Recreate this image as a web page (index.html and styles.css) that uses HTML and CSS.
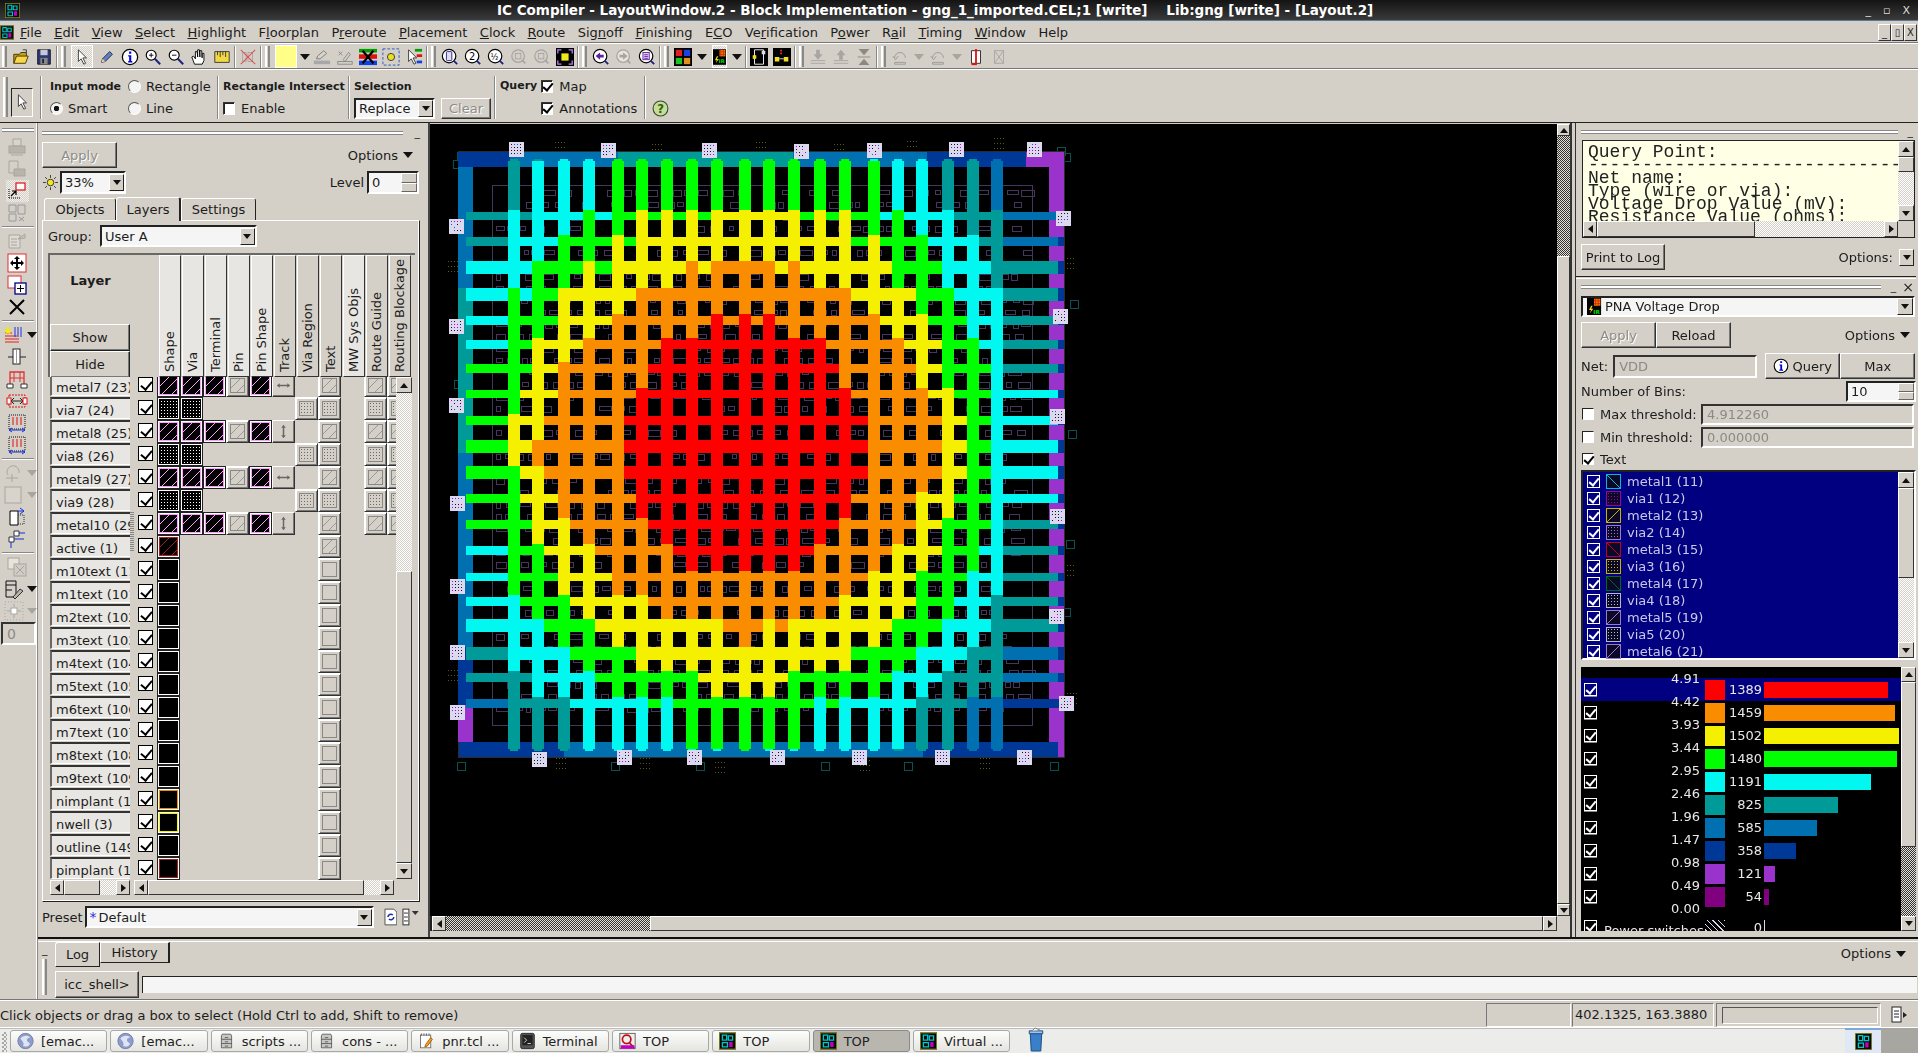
FILE: index.html
```html
<!DOCTYPE html>
<html lang="en">
<head>
<meta charset="UTF-8">
<title>IC Compiler - LayoutWindow.2</title>
<link rel="stylesheet" href="styles.css">
</head>
<body>
<svg class="sprites" xmlns="http://www.w3.org/2000/svg">
  <symbol id="chip" viewBox="0 0 20 20"><rect width="20" height="20" fill="#0a0a0a"/><rect x=".5" y=".5" width="19" height="19" fill="none" stroke="#8a8a20"/><path d="M4 3h5v6H4zM11 4h5v5h-5zM4 12h6v5H4z" fill="none" stroke="#00c8c8" stroke-width="1.5"/><path d="M12 11h4v6h-4z" fill="#c000c0"/></symbol>
  <symbol id="open" viewBox="0 0 20 20"><path d="M2 17V7h6l2-2h6v4" fill="#c8a020" stroke="#403000"/><path d="M2 17l3-8h13l-3 8z" fill="#f8d848" stroke="#403000"/><path d="M12 2l4 0 0 3" fill="none" stroke="#333"/></symbol>
  <symbol id="save" viewBox="0 0 20 20"><path d="M3 2h14v16H3z" fill="#2c3a78" stroke="#111"/><path d="M6 2h8v6H6z" fill="#c8c8d8"/><path d="M6 11h8v7H6z" fill="#888"/><path d="M8 12h2v5H8z" fill="#222"/></symbol>
  <symbol id="cursor" viewBox="0 0 20 20"><path d="M6 2v13l3-3 3 6 2-1-3-6h4z" fill="#fff" stroke="#333"/></symbol>
  <symbol id="pencil" viewBox="0 0 20 20"><path d="M4 16l1-4 8-8 3 3-8 8z" fill="#5f7fc8" stroke="#223"/><path d="M4 16l1-4 3 3z" fill="#eecc99"/></symbol>
  <symbol id="info" viewBox="0 0 20 20"><circle cx="10" cy="10" r="8.5" fill="#fff" stroke="#000" stroke-width="1.4"/><path d="M9 4h2.400v2.400H9zM8 8h3.400v6.500h1.200V16H8v-1.500h1.100V9.500H8z" fill="#0000e0"/></symbol>
  <symbol id="zoomin" viewBox="0 0 20 20"><circle cx="8" cy="8" r="5.500" fill="#fff" stroke="#000" stroke-width="1.3"/><path d="M5.500 8h5M8 5.500v5" stroke="#000"/><path d="M12 12l6 6" stroke="#202080" stroke-width="2.200"/></symbol>
  <symbol id="zoomout" viewBox="0 0 20 20"><circle cx="8" cy="8" r="5.500" fill="#fff" stroke="#000" stroke-width="1.3"/><path d="M5.500 8h5" stroke="#000"/><path d="M12 12l6 6" stroke="#202080" stroke-width="2.200"/></symbol>
  <symbol id="hand" viewBox="0 0 20 20"><path d="M5 18L2 10l2-1 2 3V4l2 0 .5 6V2h2l.5 8V3h2l.5 8V6h2v8l-2 4z" fill="#fff" stroke="#000"/></symbol>
  <symbol id="ruler" viewBox="0 0 20 20"><path d="M2 4l16 0 0 12-16 0z" fill="#f0d840" stroke="#333"/><path d="M5 4v4M8 4v6M11 4v4M14 4v6" stroke="#333"/></symbol>
  <symbol id="nopin" viewBox="0 0 20 20"><path d="M4 5h4v10H4zM10 5h5v10h-5z" fill="none" stroke="#a8a4a0"/><path d="M2 2l16 16M18 2L2 18" stroke="#e05050" stroke-width="1.200"/></symbol>
  <symbol id="erase" viewBox="0 0 20 20"><path d="M4 12l1-3 7-6 3 3-7 6z" fill="#d8d4cc" stroke="#777"/><rect x="1" y="14" width="18" height="4" fill="#a8a8a8"/></symbol>
  <symbol id="brush" viewBox="0 0 20 20"><path d="M3 4l4 4M7 4L3 8M8 13l6-8 2 2-6 8z" fill="none" stroke="#888"/><rect x="2" y="15" width="16" height="3" fill="none" stroke="#888"/></symbol>
  <symbol id="highx" viewBox="0 0 20 20"><rect width="20" height="4" y="1" fill="#00a000"/><rect y="7" width="20" height="5" fill="#e01010"/><rect y="14" width="20" height="5" fill="#1040e0"/><path d="M4 3l12 14M16 3L4 17" stroke="#000" stroke-width="2.400"/></symbol>
  <symbol id="sunbox" viewBox="0 0 20 20"><rect x="1" y="1" width="18" height="18" fill="none" stroke="#2050c0" stroke-dasharray="3 2"/><circle cx="10" cy="10" r="4" fill="#e8e020" stroke="#333"/></symbol>
  <symbol id="colcur" viewBox="0 0 20 20"><path d="M4 2v13l3-3 3 6 2-1-3-6h4z" fill="#fff" stroke="#333"/><rect x="11" y="1" width="8" height="3" fill="#00a000"/><rect x="13" y="7" width="6" height="3" fill="#e01010"/><rect x="13" y="14" width="6" height="3" fill="#1040e0"/></symbol>
  <symbol id="dev" viewBox="0 0 20 20"><circle cx="9" cy="9" r="7.500" fill="#fff" stroke="#000" stroke-width="1.300"/><rect x="6" y="4" width="6" height="10" rx="1" fill="#dde" stroke="#202080"/><path d="M14 14l4 4" stroke="#202080" stroke-width="2"/></symbol>
  <symbol id="mag2" viewBox="0 0 20 20"><circle cx="9" cy="9" r="7.500" fill="#fff" stroke="#000" stroke-width="1.300"/><text x="5.500" y="13" font-family="DejaVu Sans" font-size="11" fill="#000">2</text><path d="M14 14l4 4" stroke="#202080" stroke-width="2"/></symbol>
  <symbol id="magh" viewBox="0 0 20 20"><circle cx="9" cy="9" r="7.500" fill="#fff" stroke="#000" stroke-width="1.300"/><text x="4" y="13" font-family="DejaVu Sans" font-size="9" fill="#000">½</text><path d="M14 14l4 4" stroke="#202080" stroke-width="2"/></symbol>
  <symbol id="gmag" viewBox="0 0 20 20"><circle cx="9" cy="9" r="7" fill="none" stroke="#a8a4a0" stroke-width="1.400"/><rect x="6" y="6" width="6" height="6" fill="none" stroke="#a8a4a0"/><path d="M14 14l3 3" stroke="#a8a4a0" stroke-width="2"/></symbol>
  <symbol id="fitbox" viewBox="0 0 20 20"><rect width="20" height="20" fill="#000"/><rect x="6" y="6" width="8" height="8" fill="#f0e820"/><path d="M2 6V2h4M14 2h4v4M18 14v4h-4M6 18H2v-4" fill="none" stroke="#c080ff" stroke-width="1.400"/></symbol>
  <symbol id="back" viewBox="0 0 20 20"><circle cx="9" cy="9" r="7.500" fill="#fff" stroke="#000" stroke-width="1.300"/><path d="M4 9l5-4v2.500h4v3H9V13z" fill="#6020a0"/><path d="M14 14l4 4" stroke="#202080" stroke-width="2"/></symbol>
  <symbol id="fwd" viewBox="0 0 20 20"><circle cx="9" cy="9" r="7" fill="#e8e4dc" stroke="#a8a4a0" stroke-width="1.400"/><path d="M14 9l-5-4v2.500H5v3h4V13z" fill="#a8a4a0"/><path d="M14 14l3 3" stroke="#a8a4a0" stroke-width="2"/></symbol>
  <symbol id="lst" viewBox="0 0 20 20"><circle cx="9" cy="9" r="7.500" fill="#fff" stroke="#000" stroke-width="1.300"/><rect x="5.500" y="5" width="7" height="8" fill="#e0d0f0" stroke="#6020a0"/><path d="M7 7.500h4M7 9.500h4M7 11.500h4" stroke="#6020a0"/><path d="M14 14l4 4" stroke="#202080" stroke-width="2"/></symbol>
  <symbol id="quad" viewBox="0 0 20 20"><rect width="20" height="20" fill="#000"/><rect x="2" y="2" width="7" height="7" fill="#e02020"/><rect x="11" y="2" width="7" height="7" fill="#2040e0"/><rect x="2" y="11" width="7" height="7" fill="#20c020"/><rect x="11" y="11" width="7" height="7" fill="#e09020"/></symbol>
  <symbol id="ir" viewBox="0 0 20 24"><rect width="20" height="24" fill="#000"/><rect x="10" y="1" width="9" height="10" fill="#e08000"/><path d="M12 1v10M16 1v10M10 4h9M10 8h9" stroke="#e01010"/><path d="M6 11l-3 6h3l-2 5 5-7H6l2-4z" fill="#f0e020"/><text x="9" y="22" font-family="DejaVu Sans" font-size="8" font-weight="700" fill="#00e000">IR</text></symbol>
  <symbol id="blk1" viewBox="0 0 20 20"><rect width="20" height="20" fill="#000"/><path d="M5 2h10v16H5z" fill="none" stroke="#fff"/><rect x="3" y="8" width="4" height="4" fill="#f0e020"/><rect x="13" y="3" width="4" height="4" fill="#e0e0e0"/></symbol>
  <symbol id="blk2" viewBox="0 0 20 20"><rect width="20" height="20" fill="#000"/><rect x="2" y="10" width="5" height="5" fill="#f0e020"/><rect x="12" y="10" width="5" height="5" fill="#f0e020"/><path d="M9 2v5" stroke="#e03030" stroke-width="2" stroke-dasharray="2 1"/><path d="M7 12h5" stroke="#e0e0e0"/></symbol>
  <symbol id="gdown" viewBox="0 0 20 20"><path d="M8 2h4v5h3l-5 6-5-6h3z" fill="#a8a4a0"/><path d="M2 14h16M2 17h16" stroke="#a8a4a0"/></symbol>
  <symbol id="gup" viewBox="0 0 20 20"><path d="M8 13h4V8h3l-5-6-5 6h3z" fill="#a8a4a0"/><path d="M2 14h16M2 17h16" stroke="#a8a4a0"/></symbol>
  <symbol id="gupdn" viewBox="0 0 20 20"><path d="M4 1h12l-6 7zM4 19h12l-6-7z" fill="#8c8880"/><path d="M3 10h14" stroke="#8c8880"/></symbol>
  <symbol id="undo" viewBox="0 0 20 20"><path d="M4 11a6 6 0 1 1 12 0" fill="none" stroke="#999"/><path d="M2 9l3 4 3-4" fill="none" stroke="#999"/><path d="M4 16h12v2H4z" fill="none" stroke="#999"/></symbol>
  <symbol id="book" viewBox="0 0 20 20"><path d="M5 3h10v14H5z" fill="#fff" stroke="#222"/><path d="M10 1v16" stroke="#e01010" stroke-width="2"/><path d="M5 18l6 0" stroke="#e01010" stroke-width="2"/></symbol>
  <symbol id="gbook" viewBox="0 0 20 20"><path d="M5 3h10v14H5z" fill="none" stroke="#a8a4a0"/><path d="M5 3l10 14M15 3L5 17" stroke="#a8a4a0"/></symbol>
  <symbol id="printer" viewBox="0 0 22 22"><path d="M7 3h8v7H7z" fill="#d8d4cc" stroke="#a8a4a0"/><rect x="3" y="10" width="16" height="7" fill="#b8b4ac" stroke="#a8a4a0"/><path d="M5 19h12" stroke="#a8a4a0"/></symbol>
  <symbol id="copy" viewBox="0 0 22 22"><path d="M3 3h9v12H3z" fill="none" stroke="#a8a4a0"/><path d="M8 11h11v7H8z" fill="#b8b4ac" stroke="#a8a4a0"/></symbol>
  <symbol id="selcorner" viewBox="0 0 22 22"><path d="M3 18V8M3 18h12" stroke="#000" stroke-dasharray="1 1"/><rect x="10" y="3" width="9" height="7" fill="#fff" stroke="#e01010" stroke-width="1.200"/><path d="M5 16l5-5M6 11h4v4" fill="none" stroke="#000" stroke-width="1.200"/></symbol>
  <symbol id="glayout" viewBox="0 0 22 22"><path d="M3 3h7v7H3zM3 12h7v7H3zM12 3h7v9h-7z" fill="none" stroke="#999"/><path d="M13 15l5 4M18 15l-5 4" stroke="#999"/></symbol>
  <symbol id="gdoc" viewBox="0 0 22 22"><path d="M3 5h11v13H3z" fill="#dedad2" stroke="#a8a4a0"/><path d="M12 9l7-5v4z" fill="#c8c4bc" stroke="#a8a4a0"/><path d="M5 9h6M5 12h6M5 15h6" stroke="#a8a4a0"/></symbol>
  <symbol id="move" viewBox="0 0 22 22"><rect x="2" y="2" width="18" height="18" fill="#fff" stroke="#e03030"/><path d="M11 4l3 3h-2v3h3V8l3 3-3 3v-2h-3v3h2l-3 3-3-3h2v-3H7v2l-3-3 3-3v2h3V7H8z" fill="#000"/></symbol>
  <symbol id="addbox" viewBox="0 0 22 22"><rect x="2" y="2" width="13" height="12" fill="#fff" stroke="#e03030"/><rect x="9" y="9" width="11" height="11" fill="#fff" stroke="#000080" stroke-width="1.300"/><path d="M11 14.500h7M14.500 11v7" stroke="#000"/></symbol>
  <symbol id="cross" viewBox="0 0 22 22"><path d="M4 4l14 14M18 4L4 18" stroke="#000" stroke-width="2"/></symbol>
  <symbol id="layers" viewBox="0 0 22 22"><path d="M2 6h4M2 9h7M2 12h12M2 15h14M2 18h14" stroke="#e02020"/><path d="M12 3v10M15 3v10M18 3v10" stroke="#2030e0"/><path d="M5 2l1.500 3 3 .5-2.500 2 .5 3L5 9l-2.500 1.500.5-3-2.500-2 3-.5z" fill="#f0e820"/></symbol>
  <symbol id="slider" viewBox="0 0 22 22"><path d="M2 11h18" stroke="#222"/><rect x="7" y="3" width="7" height="15" fill="#fff" stroke="#222"/><path d="M10.500 3v15" stroke="#999"/></symbol>
  <symbol id="bracket" viewBox="0 0 22 22"><path d="M4 19V4h14v15" fill="none" stroke="#e03030" stroke-width="1.300"/><path d="M8 4v10M14 4v10M4 10h14" stroke="#e03030"/><path d="M1 16h6v4H1zM15 16h6v4h-6z" fill="#fff" stroke="#333"/></symbol>
  <symbol id="dashbox" viewBox="0 0 22 22"><rect x="3" y="5" width="16" height="12" fill="none" stroke="#e01010" stroke-dasharray="2 1"/><path d="M6 11h10M5 11l3-3M5 11l3 3M17 11l-3-3M17 11l-3 3" stroke="#222"/><rect x="1" y="8" width="4" height="6" fill="#fff" stroke="#e01010"/><rect x="17" y="8" width="4" height="6" fill="#fff" stroke="#e01010"/></symbol>
  <symbol id="spread" viewBox="0 0 22 22"><rect x="3" y="3" width="16" height="14" fill="none" stroke="#111" stroke-dasharray="1 1"/><path d="M7 5v8M11 5v8M15 5v8" stroke="#e01010"/><path d="M3 18h16M3 18l3-2M3 18l3 2M19 18l-3-2M19 18l-3 2" stroke="#1030e0"/></symbol>
  <symbol id="gplus" viewBox="0 0 22 22"><path d="M5 13a6 6 0 1 1 11-2" fill="none" stroke="#a8a4a0"/><path d="M3 16h12M9 12v8" stroke="#a8a4a0"/></symbol>
  <symbol id="gsquare" viewBox="0 0 22 22"><rect x="2" y="3" width="16" height="16" fill="#d8d4cc" stroke="#a8a4a0"/></symbol>
  <symbol id="docarr" viewBox="0 0 22 22"><path d="M4 5h8v14H4z" fill="#fff" stroke="#000"/><path d="M12 5h6M14 2l4 3-4 3" fill="none" stroke="#1030e0"/><path d="M12 9h6v9h-6" fill="none" stroke="#333" stroke-dasharray="1 1"/></symbol>
  <symbol id="cells" viewBox="0 0 22 22"><path d="M3 9h5v5H3zM8 3h5v5H8z" fill="#fff" stroke="#333"/><path d="M13 5h6M5 14v6M8 11h10" stroke="#1030e0"/></symbol>
  <symbol id="gstack" viewBox="0 0 22 22"><rect x="2" y="2" width="11" height="11" fill="#e8e4dc" stroke="#a8a4a0"/><rect x="8" y="8" width="12" height="12" fill="#d0ccc4" stroke="#a8a4a0"/><path d="M10 10l8 8M18 10l-8 8" stroke="#a8a4a0"/></symbol>
  <symbol id="docwrench" viewBox="0 0 22 22"><path d="M3 3h10v16H3z" fill="none" stroke="#111"/><path d="M3 7h10M3 12h6" stroke="#111"/><path d="M10 19l7-8 3 2-8 8z" fill="#b8b4ac" stroke="#333"/></symbol>
  <symbol id="gcells" viewBox="0 0 22 22"><rect x="2" y="2" width="18" height="18" fill="none" stroke="#a8a4a0" stroke-dasharray="1 2"/><rect x="8" y="8" width="6" height="6" fill="#fff" stroke="#a8a4a0"/><path d="M4 11h3M15 11h3M11 4v3M11 15v3" stroke="#a8a4a0"/></symbol>
  <symbol id="sun" viewBox="0 0 16 16"><circle cx="8" cy="8" r="3.500" fill="#f0e820" stroke="#333"/><path d="M8 0v3M8 13v3M0 8h3M13 8h3M2.300 2.300l2 2M11.700 11.700l2 2M2.300 13.700l2-2M11.700 4.300l2-2" stroke="#333"/></symbol>
  <symbol id="help" viewBox="0 0 16 16"><circle cx="8" cy="8" r="7" fill="#c4dc9c" stroke="#384828"/><text x="5" y="12" font-family="DejaVu Sans" font-size="11" font-weight="700" fill="#306000">?</text></symbol>
  <symbol id="refresh" viewBox="0 0 14 18"><path d="M1 1h9l3 3v13H1z" fill="#fff" stroke="#555"/><path d="M4 9a3 3 0 0 1 5-2M10 9a3 3 0 0 1-5 2" fill="none" stroke="#2030a0" stroke-width="1.600"/></symbol>
  <symbol id="presetmenu" viewBox="0 0 18 18"><rect x="1" y="1" width="6" height="16" fill="#fff" stroke="#333"/><path d="M2 5h4M2 9h4M2 13h4" stroke="#333"/><path d="M10 3h7l-3.500 4z" fill="#333"/></symbol>
  <symbol id="logmenu" viewBox="0 0 18 18"><rect x="2" y="1" width="9" height="15" fill="#fff" stroke="#222"/><path d="M4 5h5M4 8h5M4 11h5" stroke="#222"/><path d="M13 6l4 3-4 3z" fill="#222"/></symbol>
  <symbol id="globe" viewBox="0 0 20 20"><circle cx="10" cy="10" r="9" fill="#8e9ccc" stroke="#707a9c"/><path d="M4 7c3-4 9-4 12-1-3 0-5 2-4 4s3 1 3 4c-2 3-6 3-8 2 2-3 0-5-3-9z" fill="#dfe4f4"/></symbol>
  <symbol id="cabinet" viewBox="0 0 20 20"><path d="M5 2h10l1 2v14H4V4z" fill="#c8c8c4" stroke="#555"/><path d="M4 8h12M4 13h12M8 6h4M8 11h4M8 16h4" stroke="#555"/></symbol>
  <symbol id="notepad" viewBox="0 0 20 20"><rect x="3" y="3" width="12" height="15" fill="#fff" stroke="#666"/><path d="M4 1v3M7 1v3M10 1v3M13 1v3" stroke="#666"/><path d="M8 17l1-3 6-8 2 2-6 8z" fill="#f0a020" stroke="#a05000"/></symbol>
  <symbol id="term" viewBox="0 0 20 20"><rect x="2" y="1" width="16" height="18" rx="2" fill="#555" stroke="#222"/><rect x="4" y="3" width="12" height="12" fill="#222"/><path d="M6 6l3 3-3 3M10 13h4" stroke="#eee" fill="none"/></symbol>
  <symbol id="topapp" viewBox="0 0 20 20"><rect x="1" y="1" width="18" height="18" fill="#eee" stroke="#555"/><circle cx="9" cy="8" r="5" fill="none" stroke="#c01010" stroke-width="2"/><path d="M12 12l6 6" stroke="#c01010" stroke-width="2"/><rect x="2" y="15" width="16" height="4" fill="#c000c0"/></symbol>
  <symbol id="trash" viewBox="0 0 20 26"><path d="M4 6h12l-1 19H5z" fill="#3a80c8" stroke="#1a4a80"/><path d="M3 4h14v3H3z" fill="#a0c4ec" stroke="#1a4a80"/><path d="M6 4l3-3 5 2" fill="#fff" stroke="#777"/></symbol>
  <symbol id="hbar" viewBox="0 0 20 8"><path d="M1 4l4-3v2h10V1l4 3-4 3V5H5v2z" fill="#6a6864"/></symbol>
  <symbol id="vbar" viewBox="0 0 8 20"><path d="M4 1l3 4H5v10h2l-3 4-3-4h2V5H1z" fill="#6a6864"/></symbol>
</svg>

<div class="titlebar">
  <svg class="title-icon"><use href="#chip"/></svg>
  <span class="title-text">IC Compiler - LayoutWindow.2 - Block Implementation - gng_1_imported.CEL;1 [write]    Lib:gng [write] - [Layout.2]</span>
  <span class="win-ctl"><span>_</span><span>▫</span><span>X</span></span>
</div>

<div class="menubar">
  <svg class="menu-icon"><use href="#chip"/></svg>
  <nav class="menu">
    <span><u>F</u>ile</span><span><u>E</u>dit</span><span><u>V</u>iew</span><span><u>S</u>elect</span><span><u>H</u>ighlight</span><span>F<u>l</u>oorplan</span><span>P<u>r</u>eroute</span><span><u>P</u>lacement</span><span><u>C</u>lock</span><span><u>R</u>oute</span><span>Sig<u>n</u>off</span><span><u>F</u>inishing</span><span>E<u>C</u>O</span><span>Ve<u>r</u>ification</span><span>P<u>o</u>wer</span><span>R<u>a</u>il</span><span><u>T</u>iming</span><span><u>W</u>indow</span><span>Help</span>
  </nav>
  <span class="mdi-ctl"><span>_</span><span>▯</span><span>X</span></span>
</div>

<div class="toolbar">
  <i class="grip-v"></i>
  <svg class="tool t1"><use href="#open"/></svg><svg class="tool"><use href="#save"/></svg>
  <i class="tool-sep"></i><i class="grip-v"></i>
  <span class="tool-on"><svg class="tool"><use href="#cursor"/></svg></span><svg class="tool"><use href="#pencil"/></svg><svg class="tool"><use href="#info"/></svg><svg class="tool"><use href="#zoomin"/></svg><svg class="tool"><use href="#zoomout"/></svg><svg class="tool"><use href="#hand"/></svg><svg class="tool"><use href="#ruler"/></svg>
  <i class="tool-sep"></i><svg class="tool"><use href="#nopin"/></svg>
  <i class="tool-sep"></i><i class="grip-v"></i>
  <span class="tool-on yellow"></span><i class="tri tight"></i><svg class="tool"><use href="#erase"/></svg><svg class="tool"><use href="#brush"/></svg><svg class="tool"><use href="#highx"/></svg><svg class="tool"><use href="#sunbox"/></svg><svg class="tool"><use href="#colcur"/></svg>
  <i class="tool-sep"></i><i class="grip-v"></i>
  <svg class="tool"><use href="#dev"/></svg><svg class="tool"><use href="#mag2"/></svg><svg class="tool"><use href="#magh"/></svg><svg class="tool"><use href="#gmag"/></svg><svg class="tool"><use href="#gmag"/></svg><svg class="tool"><use href="#fitbox"/></svg>
  <i class="tool-sep"></i><i class="grip-v"></i>
  <svg class="tool"><use href="#back"/></svg><svg class="tool"><use href="#fwd"/></svg><svg class="tool"><use href="#lst"/></svg>
  <i class="tool-sep"></i><i class="grip-v"></i>
  <svg class="tool"><use href="#quad"/></svg><i class="tri"></i><span class="tool-on ir-on"><svg class="tool"><use href="#ir"/></svg></span><i class="tri"></i>
  <i class="tool-sep"></i><svg class="tool"><use href="#blk1"/></svg><svg class="tool"><use href="#blk2"/></svg>
  <i class="tool-sep"></i><i class="grip-v"></i>
  <svg class="tool"><use href="#gdown"/></svg><svg class="tool"><use href="#gup"/></svg><svg class="tool"><use href="#gupdn"/></svg>
  <i class="tool-sep"></i><i class="grip-v"></i>
  <svg class="tool"><use href="#undo"/></svg><i class="tri gray"></i><svg class="tool"><use href="#undo"/></svg><i class="tri gray"></i><svg class="tool"><use href="#book"/></svg><svg class="tool"><use href="#gbook"/></svg>
</div>

<div class="modebar">
  <i class="grip-v tall"></i>
  <span class="mode-tool"><svg><use href="#cursor"/></svg></span>
  <i class="mode-sep"></i>
  <div class="mode-group input-mode">
    <b>Input mode</b><label><i class="radio"></i>Rectangle</label>
    <label><i class="radio on"></i>Smart</label><label><i class="radio"></i>Line</label>
  </div>
  <i class="mode-sep"></i>
  <div class="mode-stack rect-int"><b>Rectangle Intersect</b><label><i class="check sm"></i>Enable</label></div>
  <i class="mode-sep"></i>
  <div class="mode-stack sel-box">
    <b>Selection</b>
    <div class="sel-row"><span class="combo sel-combo"><span class="combo-text">Replace</span><i class="combo-btn"></i></span><span class="btn off clear-btn">Clear</span></div>
  </div>
  <i class="mode-sep"></i>
  <div class="query-box">
    <b>Query</b>
    <div class="mode-stack"><label><i class="check sm on"></i>Map</label><label><i class="check sm on"></i>Annotations</label></div>
  </div>
  <i class="mode-sep"></i>
  <svg class="help-icon"><use href="#help"/></svg>
</div>

<div class="work">
  <aside class="side-tools">
    <i class="side-grip"></i>
    <svg class="side"><use href="#printer"/></svg><svg class="side"><use href="#copy"/></svg><span class="side-on"><svg class="side"><use href="#selcorner"/></svg></span><svg class="side"><use href="#glayout"/></svg>
    <i class="side-sep"></i>
    <svg class="side"><use href="#gdoc"/></svg><svg class="side"><use href="#move"/></svg><svg class="side"><use href="#addbox"/></svg><svg class="side"><use href="#cross"/></svg>
    <i class="side-sep"></i>
    <span class="side-row"><svg class="side"><use href="#layers"/></svg><i class="tri"></i></span><svg class="side"><use href="#slider"/></svg><svg class="side"><use href="#bracket"/></svg><svg class="side"><use href="#dashbox"/></svg><svg class="side"><use href="#spread"/></svg><svg class="side"><use href="#spread"/></svg>
    <i class="side-sep"></i>
    <span class="side-row"><svg class="side"><use href="#gplus"/></svg><i class="tri gray"></i></span><span class="side-row"><svg class="side"><use href="#gsquare"/></svg><i class="tri gray"></i></span><svg class="side"><use href="#docarr"/></svg><svg class="side"><use href="#cells"/></svg>
    <i class="side-sep"></i>
    <svg class="side"><use href="#gstack"/></svg><span class="side-row"><svg class="side"><use href="#docwrench"/></svg><i class="tri"></i></span><span class="side-row"><svg class="side"><use href="#gcells"/></svg><i class="tri gray"></i></span>
    <span class="side-field">0</span>
  </aside>

  <div class="work-right">
    <div class="panels">
      <section class="left-dock">
        <div class="dock-head"><i class="grip-h"></i><span class="dash">_</span></div>
        <div class="apply-row"><span class="btn off apply-btn">Apply</span><span class="options">Options <i class="tri"></i></span></div>
        <div class="level-row">
          <svg class="sun"><use href="#sun"/></svg>
          <span class="combo pct-combo"><span class="combo-text">33%</span><i class="combo-btn"></i></span>
          <span class="level-label">Level</span>
          <span class="spin level-spin"><span class="combo-text">0</span><span class="spin-btns"><i></i><i></i></span></span>
        </div>
        <div class="tabs"><span class="tab">Objects</span><span class="tab active">Layers</span><span class="tab">Settings</span></div>
        <div class="tab-pane">
          <div class="group-row"><span>Group:</span><span class="combo group-combo"><span class="combo-text">User A</span><i class="combo-btn"></i></span></div>
          <div class="layer-head" id="layer-head">
            <div class="head-left">
              <b class="layer-title">Layer</b>
              <span class="head-btn">Show</span>
              <span class="head-btn">Hide</span>
            </div>
          </div>
          <div class="layer-body">
            <div class="layer-rows" id="layer-rows"></div>
            <div class="vscroll table-scroll"><i class="arrow up"></i><i class="dither light"></i><i class="thumb"></i><i class="arrow down"></i></div>
            <i class="col-grip"></i>
          </div>
          <div class="layer-hbars">
            <div class="hscroll names-bar"><i class="arrow left"></i><i class="thumb"></i><i class="dither light"></i><i class="arrow right"></i></div>
            <div class="hscroll cells-bar"><i class="arrow left"></i><i class="thumb"></i><i class="dither light"></i><i class="arrow right"></i></div>
          </div>
        </div>
        <div class="preset-row">
          <span>Preset</span>
          <span class="combo preset-combo"><span class="combo-text"><em>*</em>Default</span><i class="combo-btn"></i></span>
          <svg class="preset-a"><use href="#refresh"/></svg>
          <svg class="preset-b"><use href="#presetmenu"/></svg>
        </div>
      </section>

      <i class="splitter"></i>

      <section class="view-area">
        <div class="view-top">
          <canvas id="layout" width="1127" height="792"></canvas>
          <div class="vscroll view-v"><i class="arrow up"></i><i class="dither dark"></i><i class="thumb"></i><i class="arrow down"></i></div>
        </div>
        <div class="hscroll view-h"><i class="arrow left"></i><i class="dither dark"></i><i class="thumb"></i><i class="arrow right"></i></div>
      </section>

      <i class="splitter right"></i>

      <section class="right-dock">
        <div class="dock-head r1"><i class="grip-h"></i><span class="dash">_</span></div>
        <div class="query-text">
          <div class="query-main">
            <pre class="query-pre">Query Point:
---------------------------------------
Net name:
Type (wire or via):
Voltage Drop Value (mV):
Resistance Value (ohms):</pre>
            <div class="vscroll q-v"><i class="arrow up"></i><i class="thumb"></i><i class="dither light"></i><i class="arrow down"></i></div>
          </div>
          <div class="hscroll q-h"><i class="arrow left"></i><i class="thumb"></i><i class="dither light"></i><i class="arrow right"></i></div>
        </div>
        <div class="print-row"><span class="btn print-btn">Print to Log</span><span class="print-opt">Options:<i class="combo-btn"></i></span></div>
        <i class="dock-divider"></i>
        <div class="dock-head r2"><i class="grip-h"></i><span class="dash">_</span><span class="dock-x">×</span></div>
        <span class="combo pna-combo"><span class="combo-text"><svg class="pna-icon"><use href="#ir"/></svg>PNA Voltage Drop</span><i class="combo-btn"></i></span>
        <div class="pna-actions"><span class="btn off act">Apply</span><span class="btn act">Reload</span><span class="options">Options <i class="tri"></i></span></div>
        <div class="net-row"><span>Net:</span><span class="field net-field">VDD</span><span class="btn q-btn"><svg><use href="#info"/></svg>Query</span><span class="btn max-btn">Max</span></div>
        <div class="bins-row"><span>Number of Bins:</span><span class="spin bins-spin"><span class="combo-text">10</span><span class="spin-btns"><i></i><i></i></span></span></div>
        <div class="thresh-row"><i class="check"></i><span class="t-name">Max threshold:</span><span class="field t-field">4.912260</span></div>
        <div class="thresh-row"><i class="check"></i><span class="t-name">Min threshold:</span><span class="field t-field">0.000000</span></div>
        <div class="text-row"><i class="check on"></i>Text</div>
        <div class="layer-list">
          <div class="list-rows" id="list-rows"></div>
          <div class="vscroll list-v"><i class="arrow up"></i><i class="thumb"></i><i class="dither light"></i><i class="arrow down"></i></div>
        </div>
        <div class="hist">
          <div class="hist-rows" id="hist-rows"></div>
          <div class="vscroll hist-v"><i class="arrow up"></i><i class="thumb"></i><i class="dither dark"></i><i class="arrow down"></i></div>
        </div>
      </section>
    </div>

    <div class="log-dock">
      <div class="log-left">
        <span class="dash">_</span>
        <i class="grip-v log-grip"></i>
      </div>
      <div class="log-main">
        <div class="log-tabs"><span class="tab active log-tab">Log</span><span class="tab hist-tab">History</span><span class="options log-opt">Options <i class="tri"></i></span></div>
        <div class="shell-row"><span class="btn shell-btn">icc_shell&gt;</span><span class="shell-input"></span></div>
      </div>
    </div>
  </div>
</div>

<footer class="statusbar">
  <span class="status-msg">Click objects or drag a box to select (Hold Ctrl to add, Shift to remove)</span>
  <span class="status-cell s-a"></span>
  <span class="status-cell s-b">402.1325, 163.3880</span>
  <span class="status-cell s-c"><i></i></span>
  <svg class="status-icon"><use href="#logmenu"/></svg>
</footer>

<div class="taskbar">
  <i class="task-grip"></i>
  <span class="task"><svg><use href="#globe"/></svg>[emac...</span>
  <span class="task"><svg><use href="#globe"/></svg>[emac...</span>
  <span class="task"><svg><use href="#cabinet"/></svg>scripts ...</span>
  <span class="task"><svg><use href="#cabinet"/></svg>cons - ...</span>
  <span class="task"><svg><use href="#notepad"/></svg>pnr.tcl ...</span>
  <span class="task"><svg><use href="#term"/></svg>Terminal</span>
  <span class="task"><svg><use href="#topapp"/></svg>TOP</span>
  <span class="task"><svg><use href="#chip"/></svg>TOP</span>
  <span class="task current"><svg><use href="#chip"/></svg>TOP</span>
  <span class="task"><svg><use href="#chip"/></svg>Virtual ...</span>
  <svg class="trash"><use href="#trash"/></svg>
  <span class="tray"><span class="tray-on"><svg><use href="#chip"/></svg></span></span>
</div>

<script src="script.js"></script>
</body>
</html>
```
FILE: styles.css
```css
* { box-sizing: border-box; }
html, body { margin: 0; padding: 0; }
body {
  width: 1918px;
  height: 1053px;
  overflow: hidden;
  background: #d4d0c8;
  color: #1c1c1c;
  font-family: "DejaVu Sans", sans-serif;
  font-size: 13px;
  line-height: 15px;
  display: flex;
  flex-direction: column;
}
i, em { font-style: normal; }
.sprites { width: 0; height: 0; position: absolute; }

/* title + menu */
.titlebar {
  height: 21px;
  background: linear-gradient(#141414, #3a3a3a);
  color: #fff;
  display: flex;
  align-items: center;
  border-bottom: 1px solid #5a7a9a;
  flex: none;
}
.title-icon { width: 15px; height: 15px; margin-left: 5px; }
.title-text { margin-left: 477px; font-weight: 700; white-space: pre; font-size: 13.5px; }
.win-ctl { margin-left: auto; display: flex; gap: 12px; margin-right: 8px; color: #ddd; font-size: 11px; }
.menubar {
  height: 23px;
  display: flex;
  align-items: center;
  border-bottom: 1px solid #fff;
  box-shadow: inset 0 -1px 0 #777;
  flex: none;
}
.menu-icon { width: 14px; height: 15px; margin-left: 0; }
.menu { display: flex; gap: 12.4px; margin-left: 6px; }
.mdi-ctl { margin-left: auto; display: flex; margin-right: 1px; }
.mdi-ctl span {
  width: 13px; height: 17px; font-size: 10px; line-height: 15px; text-align: center;
  border: 1px solid; border-color: #fff #333 #333 #fff;
}

/* toolbars */
.toolbar {
  height: 26px;
  display: flex;
  align-items: center;
  gap: 5px;
  padding-left: 2px;
  border-bottom: 1px solid #fff;
  box-shadow: inset 0 -1px 0 #777;
  flex: none;
}
.grip-v { width: 5px; height: 21px; border-left: 2px solid #fff; border-right: 2px solid #888; background: #d4d0c8; flex: none; }
.grip-v.tall { height: 40px; margin: 0 2px 0 3px; }
.tool { width: 18px; height: 18px; flex: none; }
.tool-sep { width: 2px; height: 22px; border-left: 1px solid #888; border-right: 1px solid #fff; flex: none; margin: 0 -2px; }
.tool-on {
  width: 22px; height: 23px; display: flex; align-items: center; justify-content: center; flex: none;
  border: 1px solid #fff; background: repeating-conic-gradient(#d4d0c8 0 25%, #f2f0ec 0 50%) 0 0 / 2px 2px;
}
.tool-on.yellow { background: #ffff88; }
.tool-on.ir-on { width: 15px; }
.tool-on.ir-on .tool { width: 13px; height: 20px; }
.tri { width: 0; height: 0; border: 5px solid transparent; border-top: 6px solid #111; border-bottom: 0; display: inline-block; flex: none; }
.tri.gray { border-top-color: #a8a4a0; }
.tri.tight { margin: 0 -2px; }
.modebar {
  height: 53px;
  display: flex;
  align-items: center;
  border-bottom: 1px solid #222;
  flex: none;
  padding-top: 2px;
}
.modebar b { font-size: 11px; white-space: nowrap; }
.mode-tool {
  width: 22px; height: 29px; margin-left: 1px; margin-top: 10px; display: flex; align-items: center; justify-content: center;
  border: 1px solid; border-color: #222 #fff #fff #222;
}
.mode-tool svg { width: 18px; height: 20px; }
.mode-sep { width: 2px; height: 43px; border-left: 1px solid #888; border-right: 1px solid #fff; flex: none; }
.mode-tool + .mode-sep { margin-left: 7px; }
.input-mode {
  display: grid;
  grid-template-columns: 78px auto;
  grid-auto-rows: 22px;
  align-items: center;
  padding-left: 8px;
  width: 175px;
}
.modebar label { display: flex; align-items: center; }
.radio { width: 13px; height: 13px; border-radius: 50%; background: #f4f4f4; border: 1px solid; border-color: #555 #fff #fff #555; margin-right: 5px; display: inline-block; flex: none; }
.radio.on { background: radial-gradient(circle, #111 0 2.5px, #f4f4f4 3px); }
.mode-stack { display: grid; grid-auto-rows: 22px; align-items: center; }
.rect-int { padding-left: 4px; width: 129px; }
.sel-box { padding-left: 4px; width: 144px; }
.sel-row { display: flex; gap: 6px; }
.sel-combo { width: 81px; height: 21px; }
.clear-btn { width: 50px; height: 21px; }
.query-box { display: flex; padding-left: 4px; width: 148px; align-items: flex-start; }
.query-box b { line-height: 22px; margin-right: 4px; }
.help-icon { width: 17px; height: 17px; margin: 22px 0 0 6px; }
.check {
  width: 15px; height: 15px; background: #fff; border: 1px solid #000; display: inline-block; flex: none; position: relative;
}
.check.sm { width: 12px; height: 13px; margin-right: 6px; border-color: #333 #fff #fff #333; box-shadow: inset 1px 1px 0 #222; }
.check.on::after {
  content: ""; position: absolute; left: 4px; top: 1px; width: 5px; height: 9px;
  border: solid #000; border-width: 0 2px 2px 0; transform: rotate(40deg);
}
.check.sm.on::after { left: 3px; top: 0; width: 4px; height: 8px; }

/* shared controls */
.btn {
  display: flex; align-items: center; justify-content: center;
  border: 1px solid; border-color: #fff #333 #333 #fff;
  box-shadow: inset -1px -1px 0 #777; background: #d4d0c8; flex: none;
}
.btn.off { color: #8e8c88; text-shadow: 1px 1px 0 #fff; }
.combo {
  display: flex; align-items: center; background: #f5f5f5; flex: none;
  border: 2px solid; border-color: #222 #fff #fff #222; outline: 0;
}
.combo-text { flex: 1; padding-left: 3px; white-space: nowrap; overflow: hidden; display: flex; align-items: center; }
.combo-btn {
  width: 15px; height: 17px; margin-right: 0; display: flex; align-items: center; justify-content: center; flex: none;
  background: #d4d0c8; border: 1px solid; border-color: #fff #222 #222 #fff;
}
.combo-btn::after { content: ""; border: 4px solid transparent; border-top: 5px solid #111; border-bottom: 0; }
.spin { display: flex; background: #f5f5f5; border: 2px solid; border-color: #222 #fff #fff #222; flex: none; }
.spin-btns { width: 16px; display: flex; flex-direction: column; background: #d4d0c8; }
.spin-btns i { flex: 1; border: 1px solid; border-color: #fff #666 #666 #fff; }
.field { display: flex; align-items: center; padding-left: 4px; color: #8a8a86; border: 2px solid; border-color: #333 #fff #fff #333; flex: none; }
.options { display: flex; align-items: center; gap: 5px; }
.grip-h { flex: 1; height: 4px; border-top: 1px solid #888; border-bottom: 1px solid #888; background: #fff; display: block; }
.dash { font-size: 11px; line-height: 10px; }
.dither.light { background: repeating-conic-gradient(#d4d0c8 0 25%, #fff 0 50%) 0 0 / 2px 2px; }
.dither.dark { background: repeating-conic-gradient(#333 0 25%, #e4e0d8 0 50%) 0 0 / 2px 2px; }
.thumb { background: #d4d0c8; border: 1px solid; border-color: #fff #333 #333 #fff; display: block; }
.arrow {
  background: #d4d0c8; border: 1px solid; border-color: #fff #333 #333 #fff; display: flex; align-items: center; justify-content: center; flex: none;
}
.arrow::after { content: ""; border: 4px solid transparent; }
.arrow.up::after { border-bottom: 5px solid #111; border-top: 0; }
.arrow.down::after { border-top: 5px solid #111; border-bottom: 0; }
.arrow.left::after { border-right: 5px solid #111; border-left: 0; }
.arrow.right::after { border-left: 5px solid #111; border-right: 0; }
.vscroll { display: flex; flex-direction: column; flex: none; width: 16px; }
.vscroll .arrow { height: 16px; }
.vscroll .thumb, .vscroll .dither { width: 100%; }
.hscroll { display: flex; flex: none; height: 15px; }
.hscroll .arrow { width: 14px; }
.hscroll .thumb, .hscroll .dither { height: 100%; }

/* main work area */
.work { flex: none; height: 876px; display: flex; }
.side-tools {
  width: 38px; flex: none; display: flex; flex-direction: column; align-items: flex-start;
  border-right: 1px solid #888; box-shadow: inset -1px 0 0 #fff;
}
.side-grip { width: 32px; height: 4px; margin: 5px 0 4px 2px; border-top: 1px solid #888; border-bottom: 1px solid #888; background: #fff; display: block; flex: none; }
.side { width: 22px; height: 22px; flex: none; margin-left: 6px; }
.side-on { display: block; background: repeating-conic-gradient(#d4d0c8 0 25%, #f2f0ec 0 50%) 0 0 / 2px 2px; height: 22px; width: 23px; margin-left: 6px; flex: none; }
.side-on .side { margin-left: 0; }
.side-row { display: flex; align-items: center; height: 22px; flex: none; gap: 2px; }
.side-row .side { margin-left: 3px; }
.side-sep { width: 32px; height: 2px; margin: 2px 0 2px 2px; border-top: 1px solid #888; border-bottom: 1px solid #fff; flex: none; display: block; }
.side-field {
  width: 35px; height: 23px; margin-left: 1px; padding-left: 4px; font-size: 14px; line-height: 20px; color: #8a8a86;
  border: 2px solid; border-color: #333 #fff #fff #333; flex: none;
}
.work-right { flex: 1; display: flex; flex-direction: column; min-width: 0; }
.panels { height: 814px; display: flex; flex: none; }

/* left dock */
.left-dock { width: 382px; flex: none; padding-left: 4px; display: flex; flex-direction: column; }
.dock-head { height: 19px; display: flex; align-items: center; gap: 10px; flex: none; }
.left-dock .dock-head .grip-h { margin-right: 2px; }
.apply-row { height: 26px; display: flex; justify-content: space-between; align-items: center; flex: none; margin-right: 7px; }
.apply-btn { width: 75px; height: 26px; }
.level-row { height: 23px; margin-top: 3px; display: flex; align-items: center; flex: none; }
.sun { width: 15px; height: 15px; margin-left: 1px; }
.pct-combo { width: 66px; height: 23px; margin-left: 2px; }
.level-label { margin-left: auto; margin-right: 3px; }
.level-spin { width: 52px; height: 23px; margin-right: 1px; }
.tabs { height: 24px; margin-top: 2px; display: flex; align-items: flex-end; flex: none; padding-left: 2px; }
.tab {
  height: 22px; padding: 0 10px; display: flex; align-items: center; border: 1px solid; border-color: #fff #222 transparent #fff; border-bottom: 0;
  border-radius: 3px 3px 0 0; flex: none;
}
.tabs .tab { width: 72px; justify-content: center; }
.tabs .tab.active { height: 24px; width: 65px; position: relative; z-index: 1; border-right-width: 2px; margin-bottom: -1px; background: #d4d0c8; }
.tabs .tab:last-child { width: 75px; }
.tab-pane {
  width: 378px; height: 682px; flex: none; padding: 4px 4px 0 5px; display: flex; flex-direction: column;
  border: 1px solid; border-color: #fff #222 #222 #fff; box-shadow: inset -1px -1px 0 #fff;
}
.group-row { height: 22px; display: flex; align-items: center; flex: none; }
.group-combo { width: 157px; height: 22px; margin-left: 8px; }
.layer-head {
  margin-top: 6px; height: 124px; flex: none; display: grid;
  grid-template-columns: 109px repeat(11, 23px);
  border: solid #6a6864; border-width: 2px 0 0 2px;
}
.head-left { display: flex; flex-direction: column; align-items: flex-start; }
.layer-title { height: 69px; width: 81px; text-align: center; padding-top: 18px; }
.head-btn {
  width: 80px; height: 27px; display: flex; align-items: center; justify-content: center;
  border: 1px solid; border-color: #fff #222 #222 #fff; box-shadow: inset -1px -1px 0 #777; flex: none;
}
.col-head {
  writing-mode: vertical-rl; transform: rotate(180deg); display: flex; align-items: center; justify-content: flex-start;
  padding: 4px 0 0 0; white-space: nowrap; line-height: 22px; height: 122px; width: 22px; overflow: hidden;
  border: 1px solid; border-color: #333 #fff #fff #333;
}
.col-head.light { background: #e8e6e2; }
.layer-body { height: 503px; display: flex; flex: none; position: relative; }
.layer-rows { width: 348px; overflow: hidden; flex: none; }
.layer-row { height: 23px; display: grid; grid-template-columns: 82px 27px repeat(11, 23px); align-items: start; }
.layer-row:first-child { margin-top: -3px; }
.row-name {
  display: block; height: 22px; margin-left: 2px; width: 80px; background: #e8e6e2; overflow: hidden; white-space: nowrap; padding: 4px 0 0 4px;
  border-top: 2px solid #333; border-left: 2px solid #6a6864; border-bottom: 1px solid #fff; line-height: 15px;
}
.row-check { margin: 3px 0 0 8px; }
.cell { width: 23px; height: 23px; position: relative; display: block; }
.cell.blank { border: 1px solid; border-color: #fff #333 #333 #fff; background: #d4d0c8; box-shadow: inset 1px 1px 0 #fff, inset -1px -1px 0 #777; }
.cell.blank::after { content: ""; position: absolute; inset: 3px; border: 1px solid #8a8884; background: var(--fill, none); }
.cell.paint { background: #000; border: 1px solid #222; box-shadow: inset 0 0 0 1px #fff; }
.cell.paint::after { content: ""; position: absolute; inset: 1px; background: var(--fill, #000); border: 1px solid var(--line, #fff); }
.cell.track { border: 1px solid; border-color: #fff #333 #333 #fff; background: #d4d0c8; box-shadow: inset -1px -1px 0 #777; padding: 3px; }
.cell.track svg { width: 100%; height: 100%; display: block; }
.cell.none { visibility: hidden; }
.table-scroll { width: 16px; height: 503px; }
.table-scroll .dither { height: 178px; flex: none; }
.table-scroll .thumb { height: 292px; flex: none; }
.col-grip { position: absolute; left: 82px; top: 135px; width: 4px; height: 40px; background: repeating-linear-gradient(#888 0 1px, #d4d0c8 1px 2px); }
.layer-hbars { display: flex; height: 16px; flex: none; margin-left: 2px; gap: 4px; }
.names-bar { width: 80px; }
.names-bar .thumb { width: 36px; }
.names-bar .dither { width: 16px; }
.cells-bar { width: 261px; }
.cells-bar .thumb { width: 216px; }
.cells-bar .dither { width: 16px; }
.preset-row { height: 22px; margin-top: 4px; display: flex; align-items: center; flex: none; }
.preset-combo { width: 289px; height: 22px; margin-left: 2px; }
.preset-combo em { color: #3030e0; margin-right: 2px; font-size: 14px; }
.preset-a { width: 14px; height: 18px; margin-left: 10px; }
.preset-b { width: 18px; height: 18px; margin-left: 5px; }
.splitter { width: 10px; flex: none; border-right: 2px solid #444; }

/* canvas */
.view-area { width: 1140px; flex: none; display: flex; flex-direction: column; }
.view-top { display: flex; height: 793px; padding-top: 1px; flex: none; }
#layout { width: 1127px; height: 792px; background: #000; display: block; flex: none; }
.view-v { width: 13px; height: 792px; }
.view-v .arrow { height: 12px; }
.view-v .dither { height: 120px; flex: none; }
.view-v .thumb { height: 648px; flex: none; }
.view-h { width: 1127px; height: 15px; border: solid #222; border-width: 0 0 0 2px; }
.view-h .dither { width: 204px; flex: none; }
.view-h .thumb { flex: 1; }
.splitter.right { width: 6px; border-right: 1px solid #333; border-left: 2px solid #333; }

/* right dock */
.right-dock { width: 340px; flex: none; padding-left: 5px; display: flex; flex-direction: column; }
.dock-head.r1 { height: 17px; margin-right: 3px; }
.query-text { width: 333px; height: 98px; border: 1px solid #222; flex: none; background: #d4d0c8; margin-left: 1px; }
.query-main { height: 80px; display: flex; }
.query-pre {
  flex: 1; margin: 0; padding: 5px 0 0 5px; height: 80px; background: #ffffe6; overflow: hidden; min-width: 0;
  font-family: "Liberation Mono", monospace; font-size: 18px; line-height: 13px; color: #222;
}
.q-v { width: 16px; height: 80px; }
.q-v .thumb { height: 15px; flex: none; }
.q-v .dither { flex: 1; }
.q-h { width: 315px; height: 16px; }
.q-h .thumb { width: 158px; }
.q-h .dither { flex: 1; }
.print-row { height: 26px; margin-top: 6px; display: flex; align-items: center; justify-content: space-between; flex: none; padding-right: 2px; }
.print-btn { width: 84px; height: 26px; }
.print-opt { display: flex; align-items: center; gap: 6px; }
.dock-divider { height: 3px; margin: 6px 0 0 -5px; border-top: 1px solid #222; border-bottom: 1px solid #fff; display: block; flex: none; }
.dock-head.r2 { height: 15px; padding-top: 0; margin-right: 2px; }
.dock-x { font-size: 14px; line-height: 10px; margin-left: -4px; }
.pna-combo { width: 334px; height: 21px; margin-top: 2px; }
.pna-combo .combo-btn { height: 17px; width: 16px; }
.pna-icon { width: 16px; height: 17px; margin-right: 3px; }
.pna-actions { height: 26px; margin-top: 5px; display: flex; align-items: center; flex: none; padding-right: 6px; }
.pna-actions .act { width: 75px; height: 26px; }
.pna-actions .options { margin-left: auto; }
.net-row { height: 26px; margin-top: 5px; display: flex; align-items: center; flex: none; }
.net-field { width: 144px; height: 23px; margin-left: 5px; margin-right: 8px; }
.q-btn { width: 75px; height: 26px; gap: 3px; }
.q-btn svg { width: 16px; height: 16px; }
.max-btn { width: 75px; height: 26px; }
.bins-row { height: 21px; margin-top: 2px; display: flex; align-items: center; justify-content: space-between; flex: none; }
.bins-spin { width: 70px; height: 21px; }
.thresh-row { height: 22px; margin-top: 1px; display: flex; align-items: center; flex: none; }
.thresh-row .check, .text-row .check { width: 12px; height: 12px; border-color: #222 #fff #fff #222; margin-left: 1px; }
.thresh-row .t-name { width: 101px; margin-left: 6px; }
.t-field { width: 213px; height: 21px; }
.text-row { height: 22px; display: flex; align-items: center; gap: 6px; flex: none; }
.text-row .check.on::after { left: 3px; top: 0; width: 4px; height: 8px; }
.layer-list { width: 335px; height: 190px; margin: 0; display: flex; border: 2px solid #222; border-right-color: #fff; border-bottom-color: #fff; flex: none; }
.list-rows { flex: 1; background: #000080; padding-top: 1px; color: #c8c8e8; }
.list-row { height: 17px; display: flex; align-items: center; padding-left: 4px; }
.list-row .lcheck { width: 13px; height: 13px; border: 1px solid #fff; position: relative; flex: none; }
.lcheck::after { content: ""; position: absolute; left: 3px; top: 0; width: 4px; height: 8px; border: solid #fff; border-width: 0 2px 2px 0; transform: rotate(40deg); }
.lswatch { width: 15px; height: 15px; margin: 0 6px 0 6px; border: 1px solid; flex: none; background-color: #0a0a28; }
.list-v { width: 16px; height: 186px; }
.list-v .thumb { height: 90px; flex: none; }
.list-v .dither { flex: 1; }
.hist { width: 335px; height: 264px; margin-top: 7px; display: flex; flex: none; overflow: hidden; }
.hist-rows { width: 320px; flex: none; background: #000; color: #e8e8e8; position: relative; padding-top: 11px; overflow: hidden; }
.hist-row { height: 23px; display: grid; grid-template-columns: 20px 96px 25px 37px 1fr; align-items: center; position: relative; padding-left: 3px; }
.hist-row.selected { background: #000080; }
.hcheck { width: 13px; height: 13px; border: 1px solid #fff; box-shadow: 0 1px 0 #888; position: relative; display: block; }
.hcheck::after { content: ""; position: absolute; left: 3px; top: 0; width: 4px; height: 8px; border: solid #fff; border-width: 0 2px 2px 0; transform: rotate(40deg); }
.hval { text-align: right; align-self: start; margin-top: -7px; white-space: nowrap; }
.hswatch { height: 20px; width: 20px; justify-self: end; }
.hcount { text-align: right; }
.hbar { display: block; height: 16px; margin-left: 2px; }
.hval.last { position: absolute; left: 23px; width: 96px; top: 234px; margin: 0; }
.hist-row.power { margin-top: 12px; align-items: start; }
.hist-row.power .hval { margin-top: 3px; }
.hist-v { width: 15px; }
.hist-v .arrow { height: 15px; }
.hist-v .thumb { height: 165px; flex: none; }
.hist-v .dither { flex: 1; }

/* log dock */
.log-dock { height: 62px; display: flex; flex: none; border-top: 2px solid #111; box-shadow: inset 0 2px 0 #d4d0c8, inset 0 3px 0 #fff; }
.log-left { width: 17px; flex: none; padding: 6px 0 0 4px; display: flex; flex-direction: column; gap: 4px; }
.log-grip { height: 36px; width: 5px; }
.log-main { flex: 1; display: flex; flex-direction: column; padding-top: 3px; }
.log-tabs { height: 24px; display: flex; align-items: flex-start; flex: none; }
.log-tab { height: 25px; width: 45px; justify-content: center; padding: 0; border-radius: 3px 0 0 0; border-bottom: 1px solid #222; }
.hist-tab { height: 21px; width: 70px; justify-content: center; padding: 0; margin-top: 0; border-bottom: 1px solid #222; border-radius: 0; border-right-width: 2px; }
.log-opt { margin-left: auto; margin-right: 12px; margin-top: 4px; }
.shell-row { height: 28px; margin-top: 4px; display: flex; align-items: center; gap: 3px; flex: none; }
.shell-btn { width: 84px; height: 27px; }
.shell-input { flex: 1; height: 17px; background: #f5f5f5; border-top: 1px solid #222; border-left: 1px solid #222; margin-right: 1px; }

/* status + tasks */
.statusbar { height: 28px; display: flex; align-items: center; flex: none; border-top: 1px solid #777; box-shadow: inset 0 1px 0 #fff; padding-top: 2px; }
.status-msg { flex: 1; margin-top: 1px; }
.status-cell { height: 24px; border: 1px solid; border-color: #777 #fff #fff #777; display: flex; align-items: center; flex: none; }
.s-a { width: 85px; margin-right: 1px; }
.s-b { width: 142px; padding-left: 2px; margin-right: 2px; }
.s-c { width: 165px; padding: 3px 0 2px 5px; }
.s-c i { display: block; height: 100%; width: 156px; border: 1px solid; border-color: #555 #fff #fff #555; }
.status-icon { width: 18px; height: 18px; margin: 0 10px 0 9px; }
.taskbar { height: 26px; flex: none; background: #ececea; display: flex; align-items: flex-end; padding: 0 0 1px 2px; gap: 3px; border-top: 1px solid #fff; box-shadow: inset 0 1px 0 #bbb; }
.task-grip { width: 5px; height: 20px; background: repeating-conic-gradient(#a8a8a4 0 25%, #ececea 0 50%) 0 0 / 4px 4px; flex: none; }
.task {
  width: 97.33px; height: 22px; display: flex; align-items: center; gap: 7px; padding-left: 6px; white-space: nowrap; flex: none; color: #222;
  border: 1px solid #a8a8a4; border-radius: 3px; background: linear-gradient(#fdfdfc, #e4e4e0);
}
.task svg { width: 17px; height: 18px; flex: none; }
.task.current { background: #b8b6ae; border-color: #8c8a84; }
.trash { width: 20px; height: 25px; margin-left: 13px; }
.tray { margin-left: auto; width: 73px; height: 25px; margin-bottom: -1px; background: #a8a6a0; flex: none; display: flex; }
.tray-on { width: 36px; height: 25px; background: #dfe8f4; display: flex; align-items: center; justify-content: center; border-top: 2px solid #7ea8d8; }
.tray-on svg { width: 17px; height: 17px; }
```
FILE: script.js
```js
// layer table, list and histogram rows + the voltage drop map on the canvas

function stripes(color) {
  return 'repeating-linear-gradient(135deg,transparent 0 6px,' + color + ' 6px 7px)';
}
var DOTS = 'radial-gradient(circle at 1.5px 1.5px,#fff 0 .55px,transparent .65px) 0 0/3px 3px';
var GDOTS = 'radial-gradient(circle at 1.5px 1.5px,#6a6864 0 .55px,transparent .65px) 0 0/3px 3px';

function cell(type) {
  if (type === 'h') return '<span class="cell paint" style="--fill:' + stripes('#ff9cff') + ',#000;--line:#ff9cff"></span>';
  if (type === 'd') return '<span class="cell paint" style="--fill:' + DOTS + ',#000;--line:#000"></span>';
  if (type === 'g') return '<span class="cell blank" style="--fill:' + stripes('#9a9894') + '"></span>';
  if (type === 'o') return '<span class="cell blank" style="--fill:' + GDOTS + '"></span>';
  if (type === 'b') return '<span class="cell blank"></span>';
  if (type === '-') return '<span class="cell track"><svg><use href="#hbar"/></svg></span>';
  if (type === '|') return '<span class="cell track"><svg><use href="#vbar"/></svg></span>';
  if (type === 'r') return '<span class="cell paint" style="--fill:' + stripes('#a02020') + ',#000;--line:#b02020"></span>';
  if (type[0] === '#') return '<span class="cell paint" style="--fill:#000;--line:' + type + '"></span>';
  return '<span class="cell none"></span>';
}

var LAYERS = [
  ['metal7 (23)', 'h h h g h - . g . g g'],
  ['via7 (24)', 'd d . . . . o o . o o'],
  ['metal8 (25)', 'h h h g h | . g . g g'],
  ['via8 (26)', 'd d . . . . o o . o o'],
  ['metal9 (27)', 'h h h g h - . g . g g'],
  ['via9 (28)', 'd d . . . . o o . o o'],
  ['metal10 (29)', 'h h h g h | . g . g g'],
  ['active (1)', 'r . . . . . . g . . .'],
  ['m10text (110)', '#000 . . . . . . b . . .'],
  ['m1text (101)', '#000 . . . . . . b . . .'],
  ['m2text (102)', '#000 . . . . . . b . . .'],
  ['m3text (103)', '#000 . . . . . . b . . .'],
  ['m4text (104)', '#000 . . . . . . b . . .'],
  ['m5text (105)', '#000 . . . . . . b . . .'],
  ['m6text (106)', '#000 . . . . . . b . . .'],
  ['m7text (107)', '#000 . . . . . . b . . .'],
  ['m8text (108)', '#000 . . . . . . b . . .'],
  ['m9text (109)', '#000 . . . . . . b . . .'],
  ['nimplant (10)', '#f08c00 . . . . . . b . . .'],
  ['nwell (3)', '#f0f000 . . . . . . b . . .'],
  ['outline (149)', '#000 . . . . . . b . . .'],
  ['pimplant (11)', '#a02020 . . . . . . b . . .']
];

var HEADS = [['Shape', 1], ['Via', 1], ['Terminal', 1], ['Pin', 1], ['Pin Shape', 1], ['Track', 0], ['Via Region', 0], ['Text', 0], ['MW Sys Objs', 1], ['Route Guide', 0], ['Routing Blockage', 0]];

document.getElementById('layer-head').insertAdjacentHTML('beforeend', HEADS.map(function (h) {
  return '<span class="col-head' + (h[1] ? ' light' : '') + '">' + h[0] + '</span>';
}).join(''));

document.getElementById('layer-rows').innerHTML = LAYERS.map(function (row) {
  return '<div class="layer-row"><span class="row-name">' + row[0] + '</span><i class="check on row-check"></i>' +
    row[1].split(' ').map(cell).join('') + '</div>';
}).join('');

var LIST = [
  ['metal1 (11)', '#00b8d8', 'd'], ['via1 (12)', '#a000a0', 'o'], ['metal2 (13)', '#c8b400', 'u'],
  ['via2 (14)', '#a078c8', 'o'], ['metal3 (15)', '#c00020', 'd'], ['via3 (16)', '#c8b400', 'o'],
  ['metal4 (17)', '#006820', 'd'], ['via4 (18)', '#b8b8c8', 'o'], ['metal5 (19)', '#a078c8', 'u'],
  ['via5 (20)', '#b8b8c8', 'o'], ['metal6 (21)', '#a078c8', 'u']
];
document.getElementById('list-rows').innerHTML = LIST.map(function (r) {
  var bg = r[2] === 'o' ? 'radial-gradient(circle at 1.5px 1.5px,' + r[1] + ' 0 .55px,transparent .65px);background-size:3px 3px'
    : r[2] === 'd' ? 'linear-gradient(45deg,transparent 47%,' + r[1] + ' 47%,' + r[1] + ' 53%,transparent 53%)'
    : 'linear-gradient(135deg,transparent 47%,' + r[1] + ' 47%,' + r[1] + ' 53%,transparent 53%)';
  return '<div class="list-row"><i class="lcheck"></i><span class="lswatch" style="border-color:' + r[1] + ';background-image:' + bg + '"></span>' + r[0] + '</div>';
}).join('');

var HIST = [
  ['4.91', '#ff0000', 1389, 124], ['4.42', '#fa8c00', 1459, 131], ['3.93', '#f4f000', 1502, 135],
  ['3.44', '#00ff00', 1480, 133], ['2.95', '#00f8f0', 1191, 107], ['2.46', '#009a98', 825, 74],
  ['1.96', '#0070b0', 585, 53], ['1.47', '#003898', 358, 32], ['0.98', '#9933cc', 121, 11], ['0.49', '#800080', 54, 5]
];
document.getElementById('hist-rows').innerHTML = HIST.map(function (r, i) {
  return '<div class="hist-row' + (i === 0 ? ' selected' : '') + '"><i class="hcheck"></i><span class="hval">' + r[0] +
    '</span><span class="hswatch" style="background:' + r[1] + '"></span><span class="hcount">' + r[2] +
    '</span><span class="hbar" style="width:' + r[3] + 'px;background:' + r[1] + '"></span></div>';
}).join('') + '<span class="hval last">0.00</span>' +
  '<div class="hist-row power"><i class="hcheck"></i><span class="hval">Power switches</span><span class="hswatch" style="background:repeating-linear-gradient(45deg,#000 0 3px,#dcd8f0 3px 4px)"></span><span class="hcount">0</span><span class="hbar" style="width:1px;background:#dcd8f0"></span></div>';

// ---- voltage map ----
var cv = document.getElementById('layout');
var g = cv.getContext('2d');
g.translate(-430, -124);

var COL = ['#ff0000', '#fa8c00', '#f4f000', '#00ff00', '#00f8f0', '#009a98', '#0070b0', '#003898', '#9933cc', '#800080'];
var LIMITS = [128, 183, 235, 275, 318, 362, 400, 9999];
var CX = 748, CY = 448;

function band(r, dy) {
  // the orange ring bulges sideways around the middle rows
  var orange = 183 + 30 * Math.max(0, 1 - Math.abs(dy) / 160);
  if (r >= 128 && r < orange) return COL[1];
  for (var i = 0; i < LIMITS.length; i++) if (r < LIMITS[i]) return COL[i];
  return COL[8];
}
function dxOf(x) { // the right half of the map falls off faster
  var d = x - CX;
  return d > 0 ? d * 1.12 : d;
}
function colorV(x, y) { // vertical straps run a little further out at top and bottom
  var dy = y - CY;
  var a = Math.abs(dy);
  if (a > 130) a = 130 + (a - 130) * (dy < 0 ? 0.8 : 0.95);
  var dx = dxOf(x);
  return band(Math.sqrt(dx * dx + a * a), dy);
}
function colorH(x, y) {
  var dx = dxOf(x), dy = y - CY;
  return band(Math.sqrt(dx * dx + dy * dy), dy);
}

var seed = 7;
function rnd() { seed = (seed * 16807) % 2147483647; return seed / 2147483647; }

// std cell ghost outlines
g.strokeStyle = '#46365e';
g.lineWidth = 1;
g.strokeRect(492.5, 185.5, 540, 540);
for (var cy = 190; cy < 718; cy += 12) {
  for (var cx = 496; cx < 1024;) {
    var w = 4 + Math.floor(rnd() * 10);
    if (rnd() < 0.65) g.strokeRect(cx + 0.5, cy + 0.5, w, 4 + Math.floor(rnd() * 3));
    cx += w + 3 + Math.floor(rnd() * 5);
  }
}

// small terminals and dots outside of the boundary
g.strokeStyle = '#0a5050';
[[457, 152], [453, 160], [1057, 147], [1062, 153], [1070, 300], [1068, 430], [1066, 540], [1062, 608], [454, 380], [453, 500], [457, 762], [1050, 762], [611, 762], [696, 762], [821, 762], [904, 762]].forEach(function (p) {
  g.strokeRect(p[0] + 0.5, p[1] + 0.5, 8, 8);
});
g.fillStyle = '#5a5a10';
[[555, 142], [652, 144], [756, 142], [834, 144], [907, 141], [994, 138], [448, 261], [1064, 258], [1064, 565], [448, 670], [1067, 693], [556, 758], [640, 758], [715, 762], [860, 760], [980, 758]].forEach(function (p) {
  for (var a = 0; a < 12; a += 3) for (var b = 0; b < 11; b += 5) g.fillRect(p[0] + a, p[1] + b, 1, 1);
});

g.strokeStyle = '#2c2c2c';
g.strokeRect(458.5, 151.5, 606, 606);

var VX = [514, 538, 564, 589, 618, 642, 667, 692, 717, 745, 769, 794, 820, 845, 874, 898, 922, 948, 973, 997];
var HY = [216, 241, 267, 294, 320, 344, 368, 394, 420, 446, 472, 498, 524, 550, 577, 601, 625, 653, 677, 703];
var HT = [8, 9, 13, 13, 9, 9, 9];

function rect(c, x, y, w, h) { g.fillStyle = c; g.fillRect(x, y, w, h); }

// frame
rect('#003898', 458, 152, 52, 15);
rect('#0070b0', 510, 152, 108, 15);
rect('#009a98', 618, 152, 175, 15);
rect('#0070b0', 793, 152, 134, 15);
rect('#003898', 927, 152, 99, 15);
rect('#9933cc', 1026, 152, 38, 15);
rect('#0070b0', 458, 167, 15, 121);
rect('#009a98', 458, 288, 15, 165);
rect('#0070b0', 458, 453, 15, 194);
rect('#003898', 458, 647, 15, 58);
rect('#9933cc', 458, 705, 15, 37);
rect('#9933cc', 1049, 167, 15, 590);
rect('#003898', 459, 742, 105, 15);
rect('#0070b0', 564, 742, 359, 15);
rect('#003898', 923, 742, 135, 15);

// horizontals
HY.forEach(function (y, i) {
  var t = HT[i % HT.length];
  var top = y - Math.floor(t / 2);
  rect('#003898', 1058, top, 6, t);
  var xs = [466].concat(VX.map(function (v) { return v - 6; }), [1058]);
  for (var k = 0; k < xs.length - 1; k++) {
    rect(colorH((xs[k] + xs[k + 1]) / 2, y), xs[k], top, xs[k + 1] - xs[k], t);
  }
});

// verticals, the ends of a strap are a bit narrower
VX.forEach(function (x) {
  var ys = [161].concat(HY.map(function (v) { return v - 6; }), [749]);
  for (var k = 0; k < ys.length - 1; k++) {
    rect(colorV(x, (ys[k] + ys[k + 1]) / 2), x - 6, ys[k], 12, ys[k + 1] - ys[k]);
  }
  rect(colorV(x, 180), x - 4, 159, 8, 2);
  rect(colorV(x, 730), x - 4, 749, 8, 2);
});

// pads
var PADS = [
  [516, 149], [608, 150], [709, 150], [801, 151], [874, 150], [956, 149], [1034, 149],
  [456, 226], [456, 326], [456, 405], [457, 503], [457, 586], [457, 652], [457, 712],
  [1063, 218], [1060, 316], [1057, 416], [1057, 516], [1056, 616], [1066, 703],
  [539, 759], [624, 757], [694, 757], [777, 757], [859, 757], [942, 757], [1024, 757]
];
PADS.forEach(function (p) {
  var x = p[0] - 7, y = p[1] - 7;
  rect('#dcd8f0', x, y, 15, 15);
  for (var a = 2; a < 14; a += 3) {
    for (var b = 2; b < 14; b += 3) {
      var v = rnd();
      rect(v < 0.45 ? '#111' : v < 0.65 ? '#c000c0' : v < 0.8 ? '#1060c0' : '#dcd8f0', x + a, y + b, 1, 1);
    }
  }
});
```
